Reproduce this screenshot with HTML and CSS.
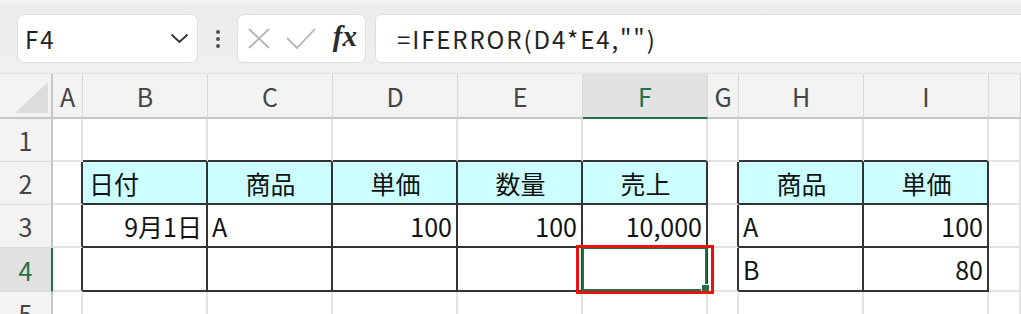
FILE: index.html
```html
<!DOCTYPE html>
<html lang="ja">

<head>
    <meta charset="UTF-8">
    <title>Sheet</title>
    <link rel="stylesheet" href="styles.css">
</head>

<body>
    <div class="toolbar">
        <div class="namebox">
            <span>F4</span>
            <svg class="chevron" width="19" height="11" viewBox="0 0 19 11"><polyline points="1.5,1.5 9.5,9 17.5,1.5" /></svg>
        </div>
        <div class="grip"><i></i><i></i><i></i></div>
        <div class="fxbox">
            <svg class="cancel" width="22" height="21" viewBox="0 0 22 21"><path d="M1 1 L21 20 M21 1 L1 20" /></svg>
            <svg class="enter" width="30" height="21" viewBox="0 0 30 21"><polyline points="1,10 11,20 29,1" /></svg>
            <span class="fx">fx</span>
        </div>
        <div class="formula">=IFERROR(D4*E4,"")</div>
    </div>

    <div class="sheet">
        <!-- column headers -->
        <div class="corner"><div class="tri"></div></div>
        <div class="colhead">A</div>
        <div class="colhead">B</div>
        <div class="colhead">C</div>
        <div class="colhead">D</div>
        <div class="colhead">E</div>
        <div class="colhead sel">F</div>
        <div class="colhead">G</div>
        <div class="colhead">H</div>
        <div class="colhead">I</div>
        <div class="colhead"></div>

        <!-- row 1 -->
        <div class="rowhead">1</div>
        <div class="cell"></div>
        <div class="cell top"></div>
        <div class="cell top"></div>
        <div class="cell top"></div>
        <div class="cell top"></div>
        <div class="cell top"></div>
        <div class="cell"></div>
        <div class="cell top"></div>
        <div class="cell top"></div>
        <div class="cell"></div>

        <!-- row 2 -->
        <div class="rowhead">2</div>
        <div class="cell left"></div>
        <div class="cell tb hd">日付</div>
        <div class="cell tb hd c">商品</div>
        <div class="cell tb hd c">単価</div>
        <div class="cell tb hd c">数量</div>
        <div class="cell tb hd c">売上</div>
        <div class="cell left"></div>
        <div class="cell tb hd c">商品</div>
        <div class="cell tb hd c">単価</div>
        <div class="cell"></div>

        <!-- row 3 -->
        <div class="rowhead">3</div>
        <div class="cell left"></div>
        <div class="cell tb r">9月1日</div>
        <div class="cell tb">A</div>
        <div class="cell tb r">100</div>
        <div class="cell tb r">100</div>
        <div class="cell tb r">10,000</div>
        <div class="cell left"></div>
        <div class="cell tb">A</div>
        <div class="cell tb r">100</div>
        <div class="cell"></div>

        <!-- row 4 -->
        <div class="rowhead sel">4</div>
        <div class="cell left"></div>
        <div class="cell tb"></div>
        <div class="cell tb"></div>
        <div class="cell tb"></div>
        <div class="cell tb"></div>
        <div class="cell tb active">
            <div class="handle"></div>
            <div class="mark"></div>
        </div>
        <div class="cell left"></div>
        <div class="cell tb">B</div>
        <div class="cell tb r">80</div>
        <div class="cell"></div>

        <!-- row 5 -->
        <div class="rowhead">5</div>
        <div class="cell"></div>
        <div class="cell"></div>
        <div class="cell"></div>
        <div class="cell"></div>
        <div class="cell"></div>
        <div class="cell"></div>
        <div class="cell"></div>
        <div class="cell"></div>
        <div class="cell"></div>
        <div class="cell"></div>
    </div>
</body>

</html>
```

FILE: styles.css
```css
body {
    margin: 0;
    overflow: hidden;
    font-family: "Noto Sans CJK JP", "Noto Sans", sans-serif;
    background: #fff;
    color: #111;
}

/* formula bar */
.toolbar {
    height: 74px;
    box-sizing: border-box;
    padding: 14px 0 0 17px;
    display: flex;
    align-items: flex-start;
    background: linear-gradient(#f6f6f6 0, #ececec 6px, #efefef 100%);
    border-bottom: 1px solid #e4e4e4;
}

.namebox,
.fxbox,
.formula {
    height: 49px;
    box-sizing: border-box;
    background: #fff;
    border: 1px solid #dedede;
    border-radius: 7px;
    display: flex;
    align-items: center;
}

.namebox {
    width: 181px;
    padding: 0 8px 0 7px;
    justify-content: space-between;
    font-size: 24px;
    letter-spacing: 2px;
    color: #222;
}

.chevron polyline {
    fill: none;
    stroke: #333;
    stroke-width: 1.8;
}

.grip {
    width: 39px;
    height: 49px;
    display: flex;
    flex-direction: column;
    align-items: center;
    justify-content: center;
    gap: 3px;
}

.grip i {
    width: 4px;
    height: 4px;
    border-radius: 50%;
    background: #505050;
}

.fxbox {
    width: 129px;
    padding: 0 8px 0 10px;
    justify-content: space-between;
}

.cancel path,
.enter polyline {
    fill: none;
    stroke: #b4b4b4;
    stroke-width: 1.8;
}

.fx {
    font-family: "Liberation Serif", serif;
    font-style: italic;
    font-weight: bold;
    font-size: 29px;
    color: #2a2a2a;
    line-height: 1;
    margin-top: -4px;
}

.formula {
    flex: 1;
    margin-left: 9px;
    margin-right: -12px;
    padding-left: 21px;
    font-size: 24px;
    letter-spacing: 1.9px;
    color: #222;
}

/* grid */
.sheet {
    display: grid;
    grid-template-columns: 53px 30px 125px 125px 125px 125px 125px 31px 125px 125px 1fr;
    grid-template-rows: 45px 43px 43px 43px 44px 43px;
    font-size: 25px;
}

.corner,
.colhead {
    box-sizing: border-box;
    background: #f3f3f3;
    border-right: 1px solid #d8d8d8;
    border-bottom: 2px solid #c6c6c6;
}

.corner {
    border-right: 2px solid #c6c6c6;
}

.corner .tri {
    width: 33px;
    height: 31px;
    margin: 8px 0 0 15px;
    background: #dcdcdc;
    clip-path: polygon(100% 0, 100% 100%, 0 100%);
}

.colhead {
    display: flex;
    align-items: center;
    justify-content: center;
    color: #444;
}

.colhead.sel {
    background: #e2e2e2;
    color: #217346;
    border-bottom-color: #217346;
}

.rowhead {
    box-sizing: border-box;
    background: #f3f3f3;
    border-right: 2px solid #c6c6c6;
    border-bottom: 1px solid #dcdcdc;
    display: flex;
    align-items: center;
    justify-content: center;
    color: #444;
}

.rowhead.sel {
    background: #e2e2e2;
    color: #217346;
    border-right-color: #217346;
}

.cell {
    box-sizing: border-box;
    border-right: 2px solid #e2e2e2;
    border-bottom: 2px solid #e2e2e2;
    padding: 0 4px;
    display: flex;
    align-items: center;
    white-space: nowrap;
}

.cell.top {
    border-bottom-color: #333;
}

.cell.left {
    border-right-color: #333;
}

.cell.tb {
    border-right-color: #333;
    border-bottom-color: #333;
}

.cell.hd {
    background: #ccffff;
    padding-left: 6px;
}

.cell.c {
    justify-content: center;
}

.cell.r {
    justify-content: flex-end;
}

/* selected cell */
.cell.active {
    position: relative;
}

.cell.active::before {
    content: "";
    position: absolute;
    top: -1px;
    left: -1px;
    right: -1px;
    bottom: -1px;
    border: 2px solid #217346;
}

.handle {
    position: absolute;
    right: -4px;
    bottom: -3px;
    width: 7px;
    height: 7px;
    background: #217346;
    border: 1px solid #fff;
}

.mark {
    position: absolute;
    top: -3px;
    left: -7px;
    right: -8px;
    bottom: -4px;
    border: 3px solid #ee1111;
}
```
